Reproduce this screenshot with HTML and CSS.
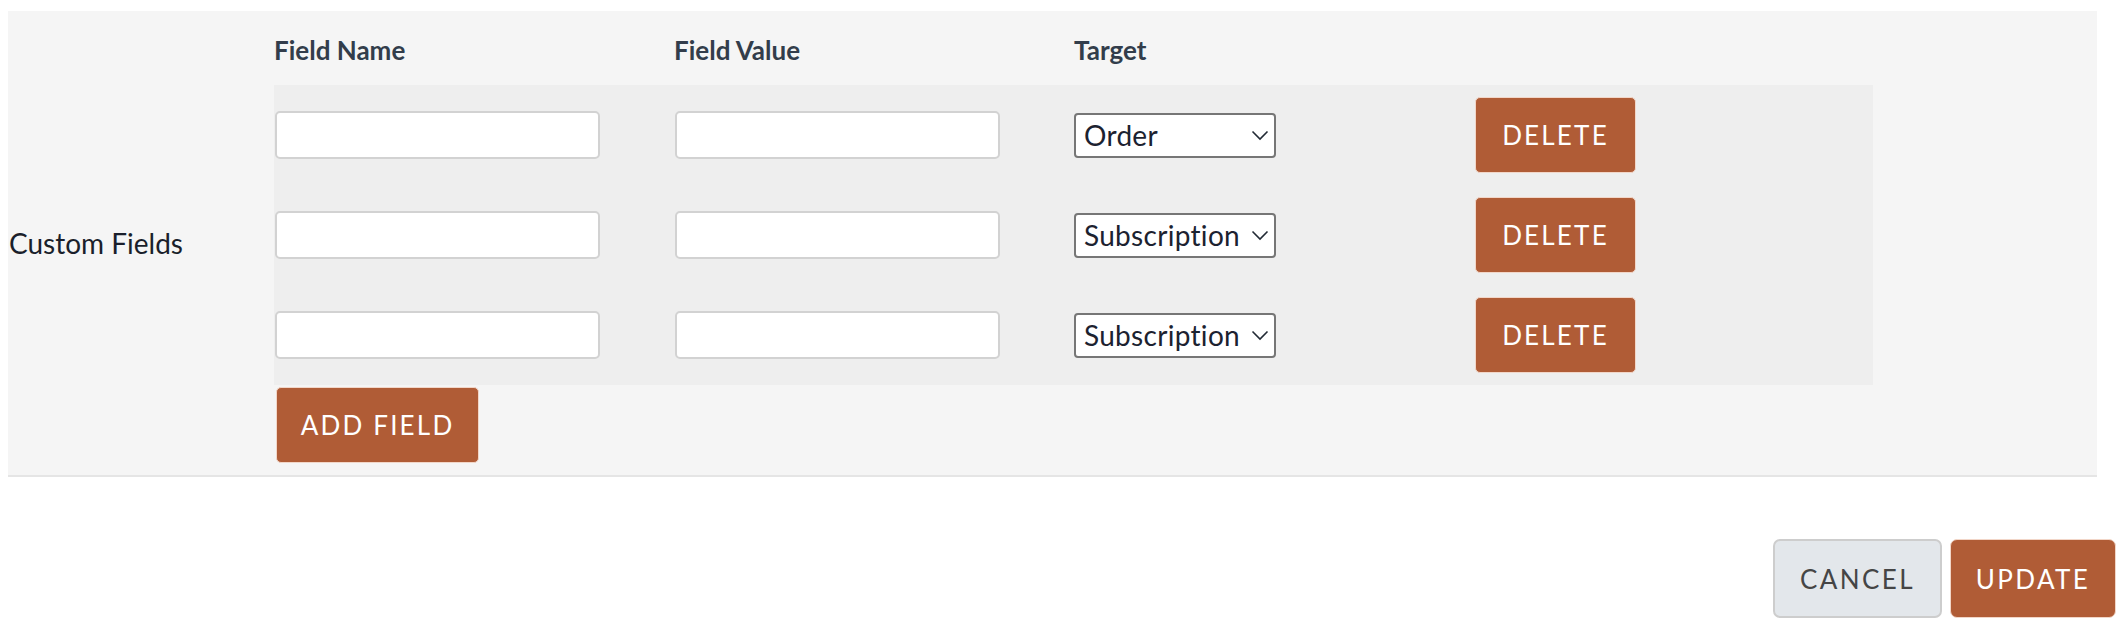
FILE: index.html
```html
<!DOCTYPE html>
<html lang="en">
<head>
<meta charset="utf-8">
<title>Custom Fields</title>
<link rel="stylesheet" href="styles.css">
</head>
<body>
<div class="panel">
  <div class="label">Custom Fields</div>
  <div class="content">
    <div class="head">
      <div class="hcell">Field Name</div>
      <div class="hcell">Field Value</div>
      <div class="hcell">Target</div>
    </div>
    <div class="rows">
      <div class="row">
        <input class="text" type="text">
        <input class="text" type="text">
        <div class="sel">
          <select class="select"><option selected>Order</option><option>Subscription</option></select>
          <svg class="chev" width="18" height="12" viewBox="0 0 18 12"><path d="M1.5 1.5 L9 9 L16.5 1.5" fill="none" stroke="#222a35" stroke-width="1.6"/></svg>
        </div>
        <button class="btn">DELETE</button>
      </div>
      <div class="row">
        <input class="text" type="text">
        <input class="text" type="text">
        <div class="sel">
          <select class="select"><option>Order</option><option selected>Subscription</option></select>
          <svg class="chev" width="18" height="12" viewBox="0 0 18 12"><path d="M1.5 1.5 L9 9 L16.5 1.5" fill="none" stroke="#222a35" stroke-width="1.6"/></svg>
        </div>
        <button class="btn">DELETE</button>
      </div>
      <div class="row">
        <input class="text" type="text">
        <input class="text" type="text">
        <div class="sel">
          <select class="select"><option>Order</option><option selected>Subscription</option></select>
          <svg class="chev" width="18" height="12" viewBox="0 0 18 12"><path d="M1.5 1.5 L9 9 L16.5 1.5" fill="none" stroke="#222a35" stroke-width="1.6"/></svg>
        </div>
        <button class="btn">DELETE</button>
      </div>
    </div>
    <div class="add">
      <button class="btn btn-add">ADD FIELD</button>
    </div>
  </div>
</div>
<div class="footer">
  <button class="btn btn-cancel">CANCEL</button>
  <button class="btn btn-update">UPDATE</button>
</div>
</body>
</html>
```

FILE: styles.css
```css
* { box-sizing: border-box; }
html, body { background: #ffffff; }
body {
  margin: 11px 8px 0 8px;
  font-family: "Lato", "Noto Sans", sans-serif;
  color: #1c2230;
}
.panel {
  width: 2089px;
  display: flex;
  background: #f5f5f5;
  border-bottom: 2px solid #e5e5e5;
}
.label {
  width: 266px;
  display: flex;
  align-items: center;
  padding-left: 1px;
  font-size: 28px;
  color: #1a1f2b;
}
.content {
  display: flex;
  flex-direction: column;
}
.head {
  display: flex;
  height: 74px;
  padding-top: 24px;
}
.hcell {
  width: 400px;
  font-size: 26px;
  font-weight: 700;
  color: #323d4b;
  line-height: 31px;
}
.rows {
  width: 1599px;
  background: #eeeeee;
}
.row {
  display: grid;
  grid-template-columns: 400px 400px 401px 398px;
  height: 100px;
  align-items: center;
}
.text {
  width: 325px;
  height: 48px;
  margin: 0 0 0 1px;
  border: 2px solid #d2d2d2;
  border-radius: 5px;
  background: #ffffff;
  font-size: 24px;
  font-family: inherit;
}
.sel {
  position: relative;
  width: 202px;
  height: 45px;
}
.select {
  -webkit-appearance: none;
  appearance: none;
  width: 202px;
  height: 45px;
  margin: 0;
  padding: 0 0 0 8px;
  border: 2px solid #767676;
  border-radius: 4px;
  background: #ffffff;
  font-family: inherit;
  font-size: 28px;
  letter-spacing: 0.3px;
  color: #1c2230;
}
.chev {
  position: absolute;
  right: 7px;
  top: 17px;
  pointer-events: none;
}
.btn {
  width: 161px;
  height: 76px;
  margin: 0;
  padding: 0;
  border: 1px solid #f2d6c8;
  border-radius: 5px;
  background: #b05c36;
  color: #ffffff;
  font-family: inherit;
  font-size: 26px;
  letter-spacing: 2.2px;
}
.add {
  padding: 2px 0 12px 2px;
}
.btn-add {
  width: 203px;
}
.footer {
  display: flex;
  justify-content: flex-end;
  gap: 8px;
  margin-top: 62px;
}
.btn-cancel {
  width: 169px;
  height: 79px;
  background: #e3e7eb;
  border: 2px solid #cdcdcd;
  border-radius: 7px;
  color: #454545;
  font-size: 26px;
  letter-spacing: 2.4px;
}
.btn-update {
  width: 166px;
  height: 79px;
  border-radius: 7px;
  font-size: 26px;
  letter-spacing: 2.4px;
}
```
